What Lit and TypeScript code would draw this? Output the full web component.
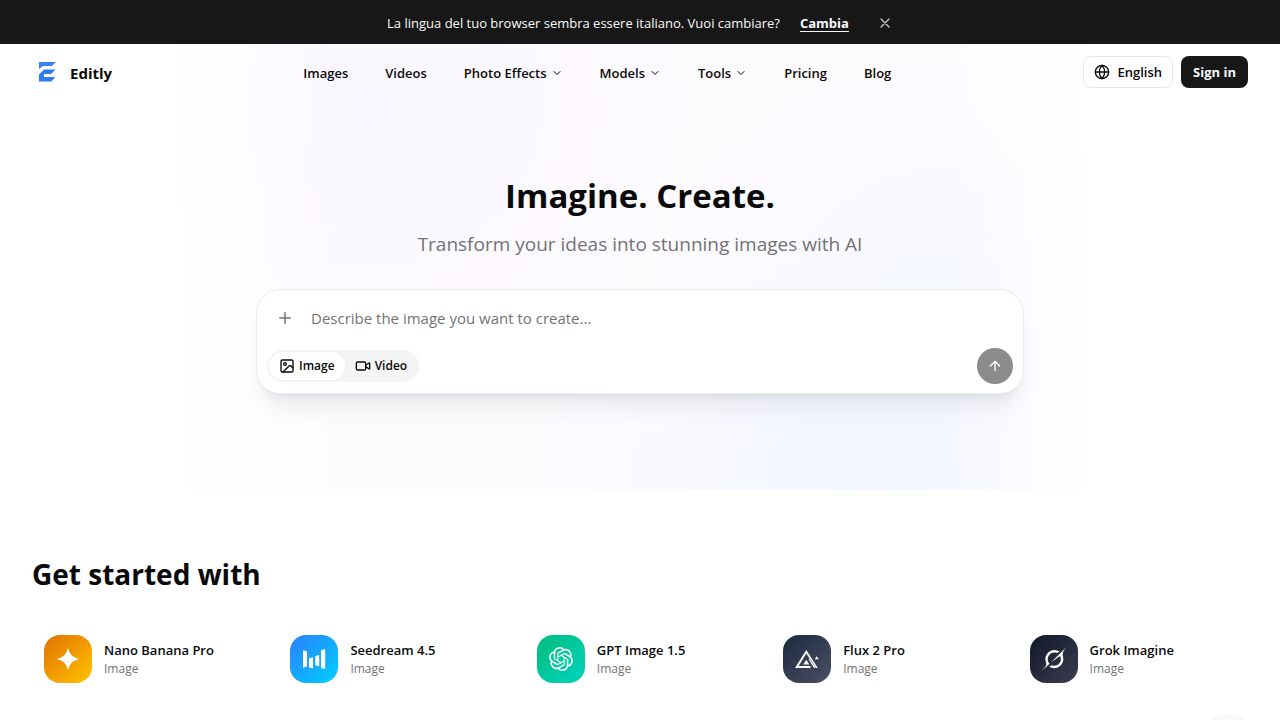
import { LitElement, html, css, svg } from "lit";
import { customElement, state } from "lit/decorators.js";

const chevron = html`<svg class="chevron" viewBox="0 0 24 24" aria-hidden="true"><path d="m6 9 6 6 6-6" /></svg>`;

const openaiMark = "M22.282 9.821a5.985 5.985 0 0 0-.516-4.91 6.046 6.046 0 0 0-6.51-2.9A6.065 6.065 0 0 0 4.981 4.18a5.985 5.985 0 0 0-3.998 2.9 6.046 6.046 0 0 0 .743 7.097 5.98 5.98 0 0 0 .51 4.911 6.051 6.051 0 0 0 6.515 2.9A5.985 5.985 0 0 0 13.26 24a6.056 6.056 0 0 0 5.772-4.206 5.99 5.99 0 0 0 3.997-2.9 6.056 6.056 0 0 0-.747-7.073zM13.26 22.43a4.476 4.476 0 0 1-2.876-1.04l.141-.081 4.779-2.758a.795.795 0 0 0 .392-.681v-6.737l2.02 1.168a.071.071 0 0 1 .038.052v5.583a4.504 4.504 0 0 1-4.494 4.494zM3.6 18.304a4.47 4.47 0 0 1-.535-3.014l.142.085 4.783 2.759a.771.771 0 0 0 .78 0l5.843-3.369v2.332a.08.08 0 0 1-.033.062L9.74 19.95a4.5 4.5 0 0 1-6.14-1.646zM2.34 7.896a4.485 4.485 0 0 1 2.366-1.973V11.6a.766.766 0 0 0 .388.676l5.815 3.355-2.02 1.168a.076.076 0 0 1-.071 0l-4.83-2.786A4.504 4.504 0 0 1 2.34 7.872zm16.597 3.855-5.833-3.387L15.119 7.2a.076.076 0 0 1 .071 0l4.83 2.791a4.494 4.494 0 0 1-.676 8.105v-5.678a.79.79 0 0 0-.407-.667zm2.01-3.023-.141-.085-4.774-2.782a.776.776 0 0 0-.785 0L9.409 9.23V6.897a.066.066 0 0 1 .028-.061l4.83-2.787a4.5 4.5 0 0 1 6.68 4.66zm-12.64 4.135-2.02-1.164a.08.08 0 0 1-.038-.057V6.075a4.5 4.5 0 0 1 7.375-3.453l-.142.08-4.778 2.758a.795.795 0 0 0-.393.681zm1.097-2.365 2.602-1.5 2.607 1.5v2.999l-2.597 1.5-2.607-1.5z";

const models = [
  { name: "Nano Banana Pro", kind: "Image", tone: "amber", mark: svg`<path d="M12 .8C13.4 7 17 10.6 23.2 12 17 13.4 13.4 17 12 23.2 10.6 17 7 13.4.8 12 7 10.6 10.6 7 12 .8Z"/>` },
  { name: "Seedream 4.5", kind: "Image", tone: "blue", mark: svg`<path d="M1 3.2 5 4.2V19.600L1 20.700ZM7 11.300 11 10.200V21.500L7 20.500ZM13.300 9 17.200 8V19.300L13.300 18.200ZM19 3.200 23.200 2V22L19 21Z"/>` },
  { name: "GPT Image 1.5", kind: "Image", tone: "green", mark: svg`<path d="${openaiMark}"/>` },
  { name: "Flux 2 Pro", kind: "Image", tone: "slate", mark: svg`<path fill-rule="evenodd" d="M0 21 11.300 3 22.800 21H20.600L11.300 6.500 3.700 19H15.500V21ZM8.200 17.500 11.300 12.700 14.300 17.500ZM13.500 12H15.400L21 21H19ZM19.700 12.200 21.700 9.200 23.800 12.200Z"/>` },
  { name: "Grok Imagine", kind: "Image", tone: "night", mark: svg`<path d="m9.270 15.290 7.978-5.897c.391-.290.950-.177 1.137.272.980 2.369.542 5.215-1.410 7.169-1.951 1.954-4.667 2.382-7.149 1.406l-2.711 1.257c3.889 2.661 8.611 2.003 11.562-.953 2.341-2.344 3.066-5.539 2.388-8.420l.006.007c-.983-4.232.242-5.924 2.750-9.383L24 .5l-3.301 3.305v-.010L9.267 15.292M7.623 16.723c-2.792-2.670-2.310-6.801.071-9.184 1.761-1.763 4.647-2.483 7.166-1.425l2.705-1.250a7.808 7.808 0 0 0-1.829-1A8.975 8.975 0 0 0 5.984 5.830c-2.533 2.536-3.330 6.436-1.962 9.764 1.022 2.487-.653 4.246-2.340 6.022C1.084 22.245.485 22.874 0 23.540l7.620-6.815"/>` },
];

const navItems = [
  { label: "Images" },
  { label: "Videos" },
  { label: "Photo Effects", menu: true },
  { label: "Models", menu: true },
  { label: "Tools", menu: true },
  { label: "Pricing" },
  { label: "Blog" },
];

@customElement("app-root")
export class AppRoot extends LitElement {
  @state() private mode: "image" | "video" = "image";

  static styles = css`
    :host {
      display: block;
      min-height: 100vh;
      overflow: hidden;
      background: #fff;
      color: #0a0a0a;
      font-family: "Open Sans", "Noto Sans", sans-serif;
      font-size: 13px;
      line-height: 20px;
    }
    * { box-sizing: border-box; }
    button, input { font: inherit; color: inherit; margin: 0; }
    button { border: 0; background: none; padding: 0; cursor: pointer; }
    a { color: inherit; text-decoration: none; }
    h1, h2, p, ul { margin: 0; padding: 0; }
    ul { list-style: none; }
    svg { display: block; flex: none; fill: none; stroke: currentColor; stroke-width: 2; stroke-linecap: round; stroke-linejoin: round; }

    .banner {
      display: flex;
      align-items: center;
      justify-content: center;
      height: 44px;
      padding: 2px 16px 0;
      background: #171717;
      color: #fafafa;
    }
    .banner a { margin-left: 20px; font-weight: 700; text-decoration: underline; text-underline-offset: 3px; }
    .banner button { margin-left: 28px; color: #c4c4c4; }
    .banner svg { width: 16px; height: 16px; }

    .stage {
      background:
        linear-gradient(90deg, #fff 13%, rgb(255 255 255 / 60%) 18%, transparent 27%, transparent 74%, rgb(255 255 255 / 60%) 81%, #fff 86%),
        radial-gradient(ellipse 24% 55% at 75% 58%, #f4f8ff, rgb(244 248 255 / 0%)),
        radial-gradient(ellipse 26% 50% at 68% 96%, #f1f6ff, rgb(241 246 255 / 0%)),
        radial-gradient(ellipse 26% 70% at 29% 14%, #faf6ff, rgb(250 246 255 / 0%)),
        #fefbff;
    }
    header {
      display: flex;
      align-items: center;
      justify-content: space-between;
      height: 56px;
      padding: 0 32px;
    }
    .brand { display: flex; align-items: center; gap: 6px; font-size: 15px; font-weight: 700; }
    .brand svg { width: 32px; height: 32px; stroke: none; }
    .brand span { padding-top: 2px; }
    .menu { display: flex; gap: 5px; font-weight: 600; }
    .menu a { display: flex; align-items: center; gap: 4px; padding: 2px 16px 0; }
    .chevron { width: 12px; height: 12px; }
    .account { display: flex; gap: 8px; font-weight: 600; }
    .account button { display: flex; align-items: center; height: 32px; border-radius: 8px; }
    .account .language { gap: 8px; padding: 0 10px; border: 1px solid #e8e8e8; background: #fff; }
    .language svg { width: 16px; height: 16px; }
    .account .signin { padding: 0 12px; background: #171717; color: #fafafa; font-weight: 700; }

    .hero { display: flex; flex-direction: column; align-items: center; padding: 72px 24px 96px; }
    h1 { font-size: 33px; line-height: 48px; font-weight: 700; }
    .lead { margin-top: 10px; font-size: 19px; line-height: 28px; color: #737373; }
    .composer {
      width: 100%;
      max-width: 768px;
      margin-top: 31px;
      padding: 10px 10px 9px;
      border: 1px solid #ececee;
      border-radius: 24px;
      background: #fff;
      box-shadow: 0 20px 25px -5px rgb(0 0 0 / 6%), 0 8px 10px -6px rgb(0 0 0 / 8%);
    }
    .prompt { display: flex; align-items: center; height: 36px; }
    .prompt button { display: grid; place-items: center; width: 36px; height: 36px; color: #737373; }
    .prompt svg { width: 18px; height: 18px; }
    .prompt input { flex: 1; min-width: 0; padding: 0 8px; border: 0; outline: 0; background: none; font-size: 15px; }
    .prompt input::placeholder { color: #737373; opacity: 1; }
    .actions { display: flex; align-items: center; justify-content: space-between; margin-top: 12px; }
    .switch { display: flex; height: 32px; padding: 2px; border-radius: 16px; background: #f4f4f4; }
    .switch button { display: flex; align-items: center; gap: 4px; padding: 0 10px; border-radius: 14px; font-size: 12px; font-weight: 600; }
    .switch .on { background: #fff; }
    .switch svg { width: 16px; height: 16px; }
    .send { display: grid; place-items: center; width: 36px; height: 36px; border-radius: 18px; background: #8b8b8b; color: #fff; }
    .send svg { width: 16px; height: 16px; }

    .start { padding: 64px 32px 0; }
    h2 { font-size: 28px; line-height: 40px; font-weight: 700; }
    .models { display: grid; grid-template-columns: repeat(5, 1fr); gap: 16px; margin-top: 29px; }
    .model { display: flex; align-items: center; gap: 12px; padding: 12px; }
    .tile { display: grid; place-items: center; width: 48px; height: 48px; border-radius: 16px; flex: none; }
    .tile svg { width: 24px; height: 24px; fill: #fff; stroke: none; }
    .amber { background: linear-gradient(135deg, #e17100, #ffc300); }
    .blue { background: linear-gradient(135deg, #2b7fff, #00d0ff); }
    .green { background: linear-gradient(135deg, #00bc7d, #00d5be); }
    .slate { background: linear-gradient(135deg, #1d293d, #4a5065); }
    .night { background: linear-gradient(135deg, #101828, #3a3d50); }
    .name { display: block; font-weight: 600; }
    .kind { display: block; font-size: 12px; line-height: 18px; color: #737373; }
    .pager { display: flex; justify-content: flex-end; margin-top: 20px; }
    .pager button { display: grid; place-items: center; width: 40px; height: 40px; border-radius: 12px; background: #f9f9f9; }
  `;

  render() {
    return html`
      <div class="banner" role="status">
        <span>La lingua del tuo browser sembra essere italiano. Vuoi cambiare?</span>
        <a href="#it">Cambia</a>
        <button aria-label="Chiudi"><svg viewBox="0 0 24 24"><path d="M18 6 6 18M6 6l12 12" /></svg></button>
      </div>
      <div class="stage">
        <header>
          <a class="brand" href="#home">
            <svg viewBox="0 0 32 32" aria-hidden="true">
              <path fill="#3b82f6" d="M7 6H24L20 10H11L7 13Z" />
              <path fill="#2f7bf0" d="M12 13.500H23.500L19 18H12V21H23L19.500 25.500H7V18.500Z" />
            </svg>
            <span>Editly</span>
          </a>
          <nav class="menu">
            ${navItems.map((item) => html`<a href="#${item.label}">${item.label}${item.menu ? chevron : ""}</a>`)}
          </nav>
          <div class="account">
            <button class="language">
              <svg viewBox="0 0 24 24"><circle cx="12" cy="12" r="10" /><path d="M12 2a14.500 14.500 0 0 0 0 20 14.500 14.500 0 0 0 0-20M2 12h20" /></svg>
              English
            </button>
            <button class="signin">Sign in</button>
          </div>
        </header>
        <section class="hero">
          <h1>Imagine. Create.</h1>
          <p class="lead">Transform your ideas into stunning images with AI</p>
          <form class="composer" @submit=${(e: Event) => e.preventDefault()}>
            <div class="prompt">
              <button type="button" aria-label="Add image"><svg viewBox="0 0 24 24"><path d="M5 12h14M12 5v14" /></svg></button>
              <input type="text" aria-label="Prompt" placeholder="Describe the image you want to create..." />
            </div>
            <div class="actions">
              <div class="switch">
                <button type="button" class=${this.mode === "image" ? "on" : ""} @click=${() => (this.mode = "image")}>
                  <svg viewBox="0 0 24 24"><rect x="3" y="3" width="18" height="18" rx="2" /><circle cx="9" cy="9" r="2" /><path d="m21 15-3.086-3.086a2 2 0 0 0-2.828 0L6 21" /></svg>
                  Image
                </button>
                <button type="button" class=${this.mode === "video" ? "on" : ""} @click=${() => (this.mode = "video")}>
                  <svg viewBox="0 0 24 24"><path d="m16 13 5.223 3.482a.5.5 0 0 0 .777-.416V7.870a.5.5 0 0 0-.752-.432L16 10.500" /><rect x="2" y="6" width="14" height="12" rx="2" /></svg>
                  Video
                </button>
              </div>
              <button class="send" aria-label="Generate"><svg viewBox="0 0 24 24"><path d="m5 12 7-7 7 7M12 19V5" /></svg></button>
            </div>
          </form>
        </section>
      </div>
      <section class="start">
        <h2>Get started with</h2>
        <ul class="models">
          ${models.map(
            (m) => html`<li>
              <a class="model" href="#${m.name}">
                <span class="tile ${m.tone}"><svg viewBox="0 0 24 24" aria-hidden="true">${m.mark}</svg></span>
                <span><span class="name">${m.name}</span><span class="kind">${m.kind}</span></span>
              </a>
            </li>`
          )}
        </ul>
        <div class="pager"><button aria-label="Next"></button></div>
      </section>
    `;
  }
}
